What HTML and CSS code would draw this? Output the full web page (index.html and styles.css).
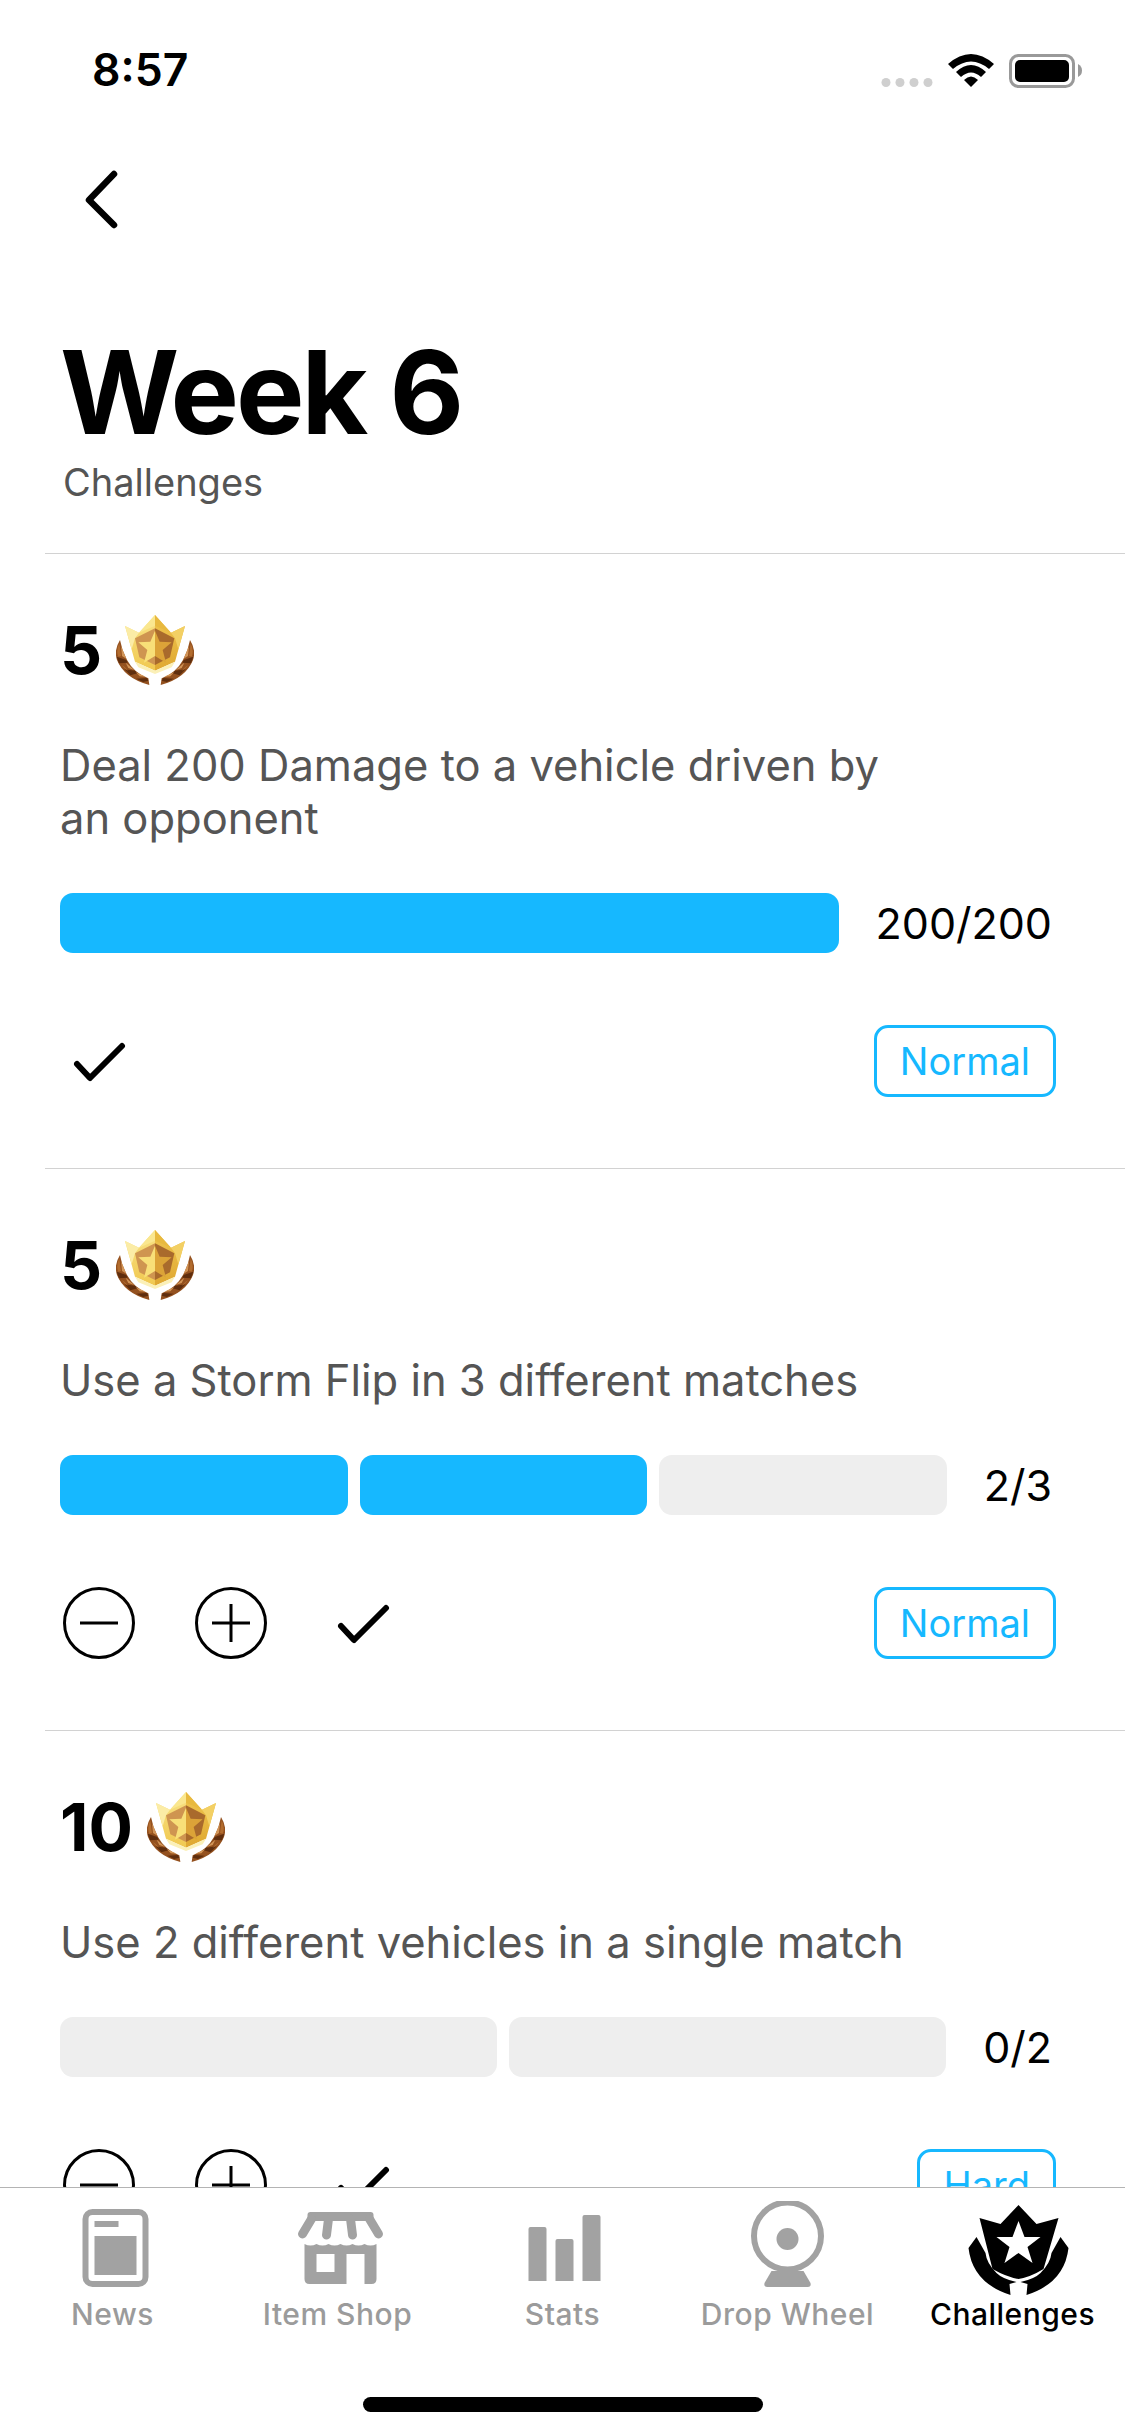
FILE: index.html
```html
<!DOCTYPE html>
<html lang="en">
<head>
<meta charset="utf-8">
<title>Week 6</title>
<link rel="stylesheet" href="styles.css">
</head>
<body>
<svg class="defs" aria-hidden="true">
  <defs>
    <linearGradient id="goldL" x1="0" y1="0" x2="0" y2="1"><stop offset="0" stop-color="#f9e488"/><stop offset="1" stop-color="#f0c850"/></linearGradient>
    <linearGradient id="goldR" x1="0" y1="0" x2="0" y2="1"><stop offset="0" stop-color="#f0c650"/><stop offset="1" stop-color="#dfa832"/></linearGradient>
    <g id="leaves">
      <path fill="#94511f" d="M27 90Q8 120 18 150Q40 205 115 225L112 205Q70 190 48 150Q32 120 27 90Z"/>
      <path fill="#5f2e0e" d="M17 140L46 150L50 158L24 160ZM40 178L72 182L80 190L58 196ZM76 206L108 204L112 212L96 216Z"/>
      <path fill="#d29557" d="M30 108L46 146L33 138ZM44 158L70 180L52 174ZM74 186L104 200L86 199Z"/>
      <path fill="#b26c2e" d="M25 100Q14 122 22 140L30 138ZM32 165Q44 180 52 182L40 170Z"/>
    </g>
    <symbol id="badge" viewBox="15 15 234 210">
      <use href="#leaves"/>
      <use href="#leaves" transform="translate(264 0) scale(-1 1)"/>
      <path fill="url(#goldL)" d="M132 15L132 182L72 155L42 48L84 68Z"/>
      <path fill="url(#goldR)" d="M132 15L132 182L192 155L222 48L180 68Z"/>
      <path fill="#fbeca6" d="M42 48L84 68L72 85L62 118Z"/>
      <path fill="#f3d064" d="M222 48L180 68L192 85L202 118Z"/>
      <path fill="#fae78f" d="M132 15L84 68L132 47Z"/>
      <path fill="#e8b93f" d="M132 15L180 68L132 47Z"/>
      <path fill="#cf9550" d="M132 55L72 85L85 142L132 165Z"/>
      <path fill="#a96a2c" d="M132 55L190 85L177 142L132 165Z"/>
      <path fill="#f8df78" d="M132 62L118 95L82 97L109 120L99 158L132 138Z"/>
      <path fill="#dca338" d="M132 62L146 95L182 97L155 120L165 158L132 138Z"/>
      <path fill="#fbf0b8" d="M72 155L132 182L192 155L182 172L132 192L82 172Z"/>
    </symbol>
    <symbol id="check" viewBox="0 0 54 44">
      <path d="M5 25L18 39L50 7" fill="none" stroke="#000" stroke-width="6" stroke-linecap="round" stroke-linejoin="round"/>
    </symbol>
    <symbol id="minus" viewBox="0 0 72 72">
      <circle cx="36" cy="36" r="34.500" fill="none" stroke="#000" stroke-width="3"/>
      <path d="M17 36H55" stroke="#000" stroke-width="3"/>
    </symbol>
    <symbol id="plus" viewBox="0 0 72 72">
      <circle cx="36" cy="36" r="34.500" fill="none" stroke="#000" stroke-width="3"/>
      <path d="M17 36H55M36 17V55" stroke="#000" stroke-width="3"/>
    </symbol>
  </defs>
</svg>

<div class="screen">
  <header class="status">
    <span class="time">8:57</span>
    <svg class="status-icons" viewBox="878 48 208 42" width="208" height="42">
      <g fill="#cfcfcf">
        <circle cx="886" cy="80.500" r="4.500"/><circle cx="900" cy="80.500" r="4.500"/><circle cx="914" cy="80.500" r="4.500"/><circle cx="928" cy="80.500" r="4.500"/>
      </g>
      <path d="M948 62Q971 42 994 62L989 67Q971 52 953 67Z"/>
      <path d="M956 70Q971 56 986 70L981 75Q971 66 961 75Z"/>
      <path d="M964 78Q971 71 978 78L971 85Z"/>
      <rect x="1010.500" y="53.500" width="63" height="31" rx="8" fill="none" stroke="#999" stroke-width="3"/>
      <rect x="1015" y="58" width="54" height="22" rx="5"/>
      <path d="M1078 62Q1082 64 1082 68.500Q1082 73 1078 75Z" fill="#999"/>
    </svg>
  </header>

  <nav class="nav">
    <svg width="40" height="60" viewBox="0 0 40 60"><path d="M32 5L7 31L32 56" fill="none" stroke="#000" stroke-width="6.500" stroke-linecap="round" stroke-linejoin="round"/></svg>
  </nav>

  <h1 class="title">Week 6</h1>
  <p class="subtitle">Challenges</p>

  <section class="card">
    <div class="reward"><span class="points">5</span><svg class="badge"><use href="#badge"/></svg></div>
    <p class="desc">Deal 200 Damage to a vehicle driven by an opponent</p>
    <div class="progress">
      <div class="bars"><span class="seg on"></span></div>
      <span class="count">200/200</span>
    </div>
    <div class="actions">
      <svg class="check"><use href="#check"/></svg>
      <span class="tag">Normal</span>
    </div>
  </section>

  <section class="card">
    <div class="reward"><span class="points">5</span><svg class="badge"><use href="#badge"/></svg></div>
    <p class="desc">Use a Storm Flip in 3 different matches</p>
    <div class="progress">
      <div class="bars"><span class="seg on"></span><span class="seg on"></span><span class="seg"></span></div>
      <span class="count">2/3</span>
    </div>
    <div class="actions">
      <svg class="round"><use href="#minus"/></svg>
      <svg class="round"><use href="#plus"/></svg>
      <svg class="check"><use href="#check"/></svg>
      <span class="tag">Normal</span>
    </div>
  </section>

  <section class="card">
    <div class="reward"><span class="points">10</span><svg class="badge"><use href="#badge"/></svg></div>
    <p class="desc">Use 2 different vehicles in a single match</p>
    <div class="progress">
      <div class="bars"><span class="seg"></span><span class="seg"></span></div>
      <span class="count">0/2</span>
    </div>
    <div class="actions">
      <svg class="round"><use href="#minus"/></svg>
      <svg class="round"><use href="#plus"/></svg>
      <svg class="check"><use href="#check"/></svg>
      <span class="tag">Hard</span>
    </div>
  </section>

  <footer class="tabbar">
    <div class="tabs">
      <div class="tab">
        <svg class="tab-icon" viewBox="52.500 2200 120 98" fill="#a2a2a2">
          <rect x="85" y="2211" width="60" height="72" rx="7" fill="none" stroke="#a2a2a2" stroke-width="6"/>
          <rect x="94" y="2220" width="24" height="6"/>
          <rect x="94" y="2235" width="42" height="39"/>
        </svg>
        <span class="tab-label">News</span>
      </div>
      <div class="tab">
        <svg class="tab-icon" viewBox="277.500 2200 120 98" fill="#a2a2a2">
          <path d="M310 2211H370Q373 2211 373 2214V2220H307V2214Q307 2211 310 2211Z"/>
          <g fill="none" stroke="#a2a2a2" stroke-width="9" stroke-linecap="round">
            <path d="M311 2218L302 2233"/>
            <path d="M369 2218L378 2233"/>
            <path d="M328 2218L326 2234"/>
            <path d="M350 2218L352 2234"/>
          </g>
          <path fill-rule="evenodd" d="M304 2243q6 3 12 0q6 3 12 0q6 3 12 0q6 3 12 0q6 3 12 0q6 3 12 0V2278Q376 2283 371 2283H364V2253H346V2283H309Q304 2283 304 2278ZM316 2253V2271H334V2253Z"/>
        </svg>
        <span class="tab-label">Item Shop</span>
      </div>
      <div class="tab">
        <svg class="tab-icon" viewBox="502.500 2200 120 98" fill="#a2a2a2">
          <path d="M528 2228Q528 2226 530 2226H544Q546 2226 546 2228V2280H528Z"/>
          <path d="M555 2240Q555 2238 557 2238H571Q573 2238 573 2240V2280H555Z"/>
          <path d="M582 2216Q582 2214 584 2214H598Q600 2214 600 2216V2280H582Z"/>
        </svg>
        <span class="tab-label">Stats</span>
      </div>
      <div class="tab">
        <svg class="tab-icon" viewBox="727.500 2200 120 98" fill="#a2a2a2">
          <circle cx="787" cy="2235" r="33.500" fill="none" stroke="#a2a2a2" stroke-width="6"/>
          <circle cx="787" cy="2238" r="11"/>
          <path d="M771 2270H803L810 2282Q811 2286 807 2286H767Q763 2286 764 2282Z"/>
        </svg>
        <span class="tab-label">Drop Wheel</span>
      </div>
      <div class="tab">
        <svg class="tab-icon" viewBox="952.500 2200 120 98">
          <path fill-rule="evenodd" d="M1018 2204L1036 2223L1058 2217L1043 2268Q1030 2276 1018 2278Q1006 2276 992 2268L979 2217L1000 2223ZM1018 2220L1012 2236H996L1009 2246L1004 2262L1018 2252L1032 2262L1027 2246L1040 2236H1024Z"/>
          <path d="M976 2236L968 2247Q972 2282 1010 2294L1009 2283L1016 2281Q1002 2278 996 2272Q986 2262 985 2252Z"/>
          <path d="M1060 2236L1068 2247Q1064 2282 1026 2294L1027 2283L1020 2281Q1034 2278 1040 2272Q1050 2262 1051 2252Z"/>
        </svg>
        <span class="tab-label active">Challenges</span>
      </div>
    </div>
    <div class="home"></div>
  </footer>
</div>
</body>
</html>
```

FILE: styles.css
```css
* { box-sizing: border-box; }
html, body { margin: 0; padding: 0; background: #fff; }
body { font-family: Inter, "Noto Sans", "Liberation Sans", sans-serif; color: #000; }
.defs { position: absolute; width: 0; height: 0; }
.screen { position: relative; width: 1125px; height: 2436px; overflow: hidden; background: #fff; }

.status { display: flex; justify-content: space-between; align-items: center; padding: 42px 39px 0 92px; height: 97px; }
.time { font-size: 44.500px; line-height: 54px; font-weight: 600; }
.status-icons { display: block; margin-top: 2px; }

.nav { margin: 72px 0 0 82px; height: 60px; }
.nav svg { display: block; }

.title { margin: 106px 0 0 60px; font-size: 115px; line-height: 115px; font-weight: 700; letter-spacing: -3px; }
.subtitle { margin: 10px 0 49px 63px; font-size: 38px; line-height: 44px; color: #555; }

.card { margin-left: 45px; padding: 61px 73px 71px 15px; border-top: 1px solid #d2d2d2; }
.reward { display: flex; align-items: center; height: 70px; }
.points { font-size: 66px; line-height: 70px; font-weight: 700; }
.badge { display: block; width: 78px; height: 70px; margin-left: 14px; }
.desc { margin: 54px 0 48px; max-width: 850px; font-size: 43.500px; line-height: 53px; color: #555; }

.progress { display: flex; align-items: center; gap: 37px; height: 60px; }
.bars { display: flex; flex: 1; gap: 12px; height: 60px; }
.seg { flex: 1; border-radius: 13px; background: #eee; }
.seg.on { background: #16b8ff; }
.count { font-size: 43px; line-height: 54px; }

.actions { display: flex; align-items: center; margin: 72px -4px 0 3px; height: 72px; }
.round { display: block; width: 72px; height: 72px; margin-right: 60px; }
.check { display: block; width: 54px; height: 44px; margin-left: 9px; }
.tag { display: flex; align-items: center; justify-content: center; margin-left: auto; height: 72px; padding: 0 23px; border: 3px solid #16b8ff; border-radius: 14px; color: #16b8ff; font-size: 38px; line-height: 48px; }

.tabbar { position: absolute; left: 0; right: 0; bottom: 0; height: 249px; background: #fff; border-top: 1px solid #b4b4b4; }
.tabs { display: grid; grid-template-columns: repeat(5, 1fr); padding-top: 13px; }
.tab { display: flex; flex-direction: column; align-items: center; }
.tab-icon { display: block; width: 120px; height: 98px; }
.tab-label { margin-top: -3px; font-size: 30px; line-height: 36px; font-weight: 500; color: #9b9b9b; letter-spacing: 0.5px; white-space: nowrap; }
.tab-label.active { color: #000; }
.home { position: absolute; left: 363px; bottom: 24px; width: 400px; height: 15px; border-radius: 8px; background: #000; }
```
